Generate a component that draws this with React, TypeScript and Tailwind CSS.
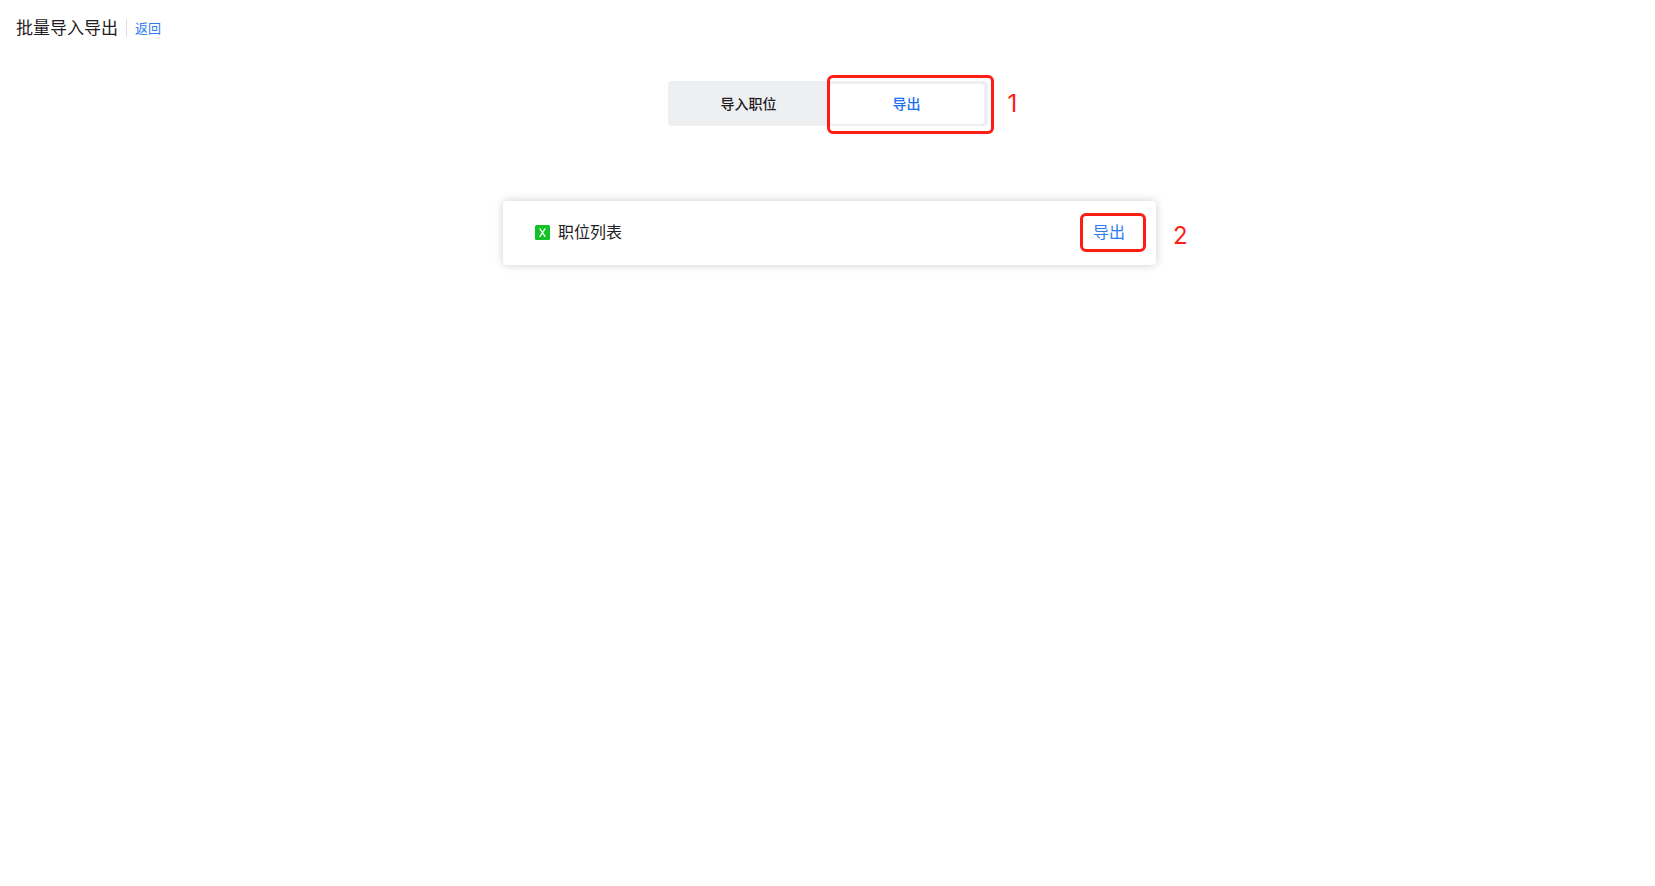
import React from 'react';
import clsx from 'clsx';

interface Tab {
  key: string;
  label: string;
}

interface MarkerProps {
  step: number;
  boxClass: string;
  labelClass: string;
}

const tabs: Tab[] = [
  { key: 'import', label: '导入职位' },
  { key: 'export', label: '导出' },
];

// Red frame with its step number, laid over the control it points at
const Marker: React.FC<MarkerProps> = ({ step, boxClass, labelClass }) => (
  <>
    <span
      className={clsx(
        'pointer-events-none absolute rounded-md border-3 border-[#fd1d14]',
        boxClass
      )}
    />
    <span
      className={clsx(
        "pointer-events-none absolute font-['Inter',sans-serif] text-2xl leading-6 font-normal text-[#fd1d14]",
        labelClass
      )}
    >
      {step}
    </span>
  </>
);

const SheetIcon: React.FC = () => (
  <svg className="h-[15px] w-[15px]" viewBox="0 0 15 15" aria-hidden="true">
    <rect width="15" height="15" rx="1.5" fill="#13c326" />
    <path
      d="M4.7 3.3 10.3 11.8M10.3 3.3 4.7 11.8"
      stroke="#fff"
      strokeWidth="1.3"
      fill="none"
    />
  </svg>
);

const App: React.FC = () => {
  const [active, setActive] = React.useState('export');

  return (
    <div className="min-h-screen bg-white font-['Noto_Sans_CJK_SC',sans-serif] text-[#1f2024]">
      <header className="flex items-center px-4 pt-[15px]">
        <h1 className="pb-0.5 text-[17px] leading-6">批量导入导出</h1>
        <span className="ml-2 h-[18px] w-px bg-[#dcdee3]" />
        <a href="#" className="ml-2 text-[13px] leading-6 text-[#2b7bf3]">
          返回
        </a>
      </header>

      <main className="flex flex-col items-center px-4 pt-10">
        <div className="relative flex h-[45px] w-80 gap-1 rounded-sm bg-[#eeeff1] px-1 pt-[3px] pb-0.5">
          {tabs.map((tab) => (
            <button
              key={tab.key}
              type="button"
              onClick={() => setActive(tab.key)}
              className={clsx(
                'flex-1 rounded-sm pb-0.5 text-sm font-medium',
                active === tab.key && 'bg-white text-[#1b6ff2]'
              )}
            >
              {tab.label}
            </button>
          ))}
          <Marker
            step={1}
            boxClass="-top-1.5 -right-1.5 h-[59px] w-[167px]"
            labelClass="top-[11px] left-full ml-5"
          />
        </div>

        <section className="relative mt-[75px] ml-1 flex h-16 w-full max-w-[653px] items-center rounded-sm bg-white pr-[31px] pb-0.5 pl-8 shadow-[0_0_10px_rgba(0,0,0,0.2)]">
          <SheetIcon />
          <span className="ml-2 pb-0.5 text-base">职位列表</span>
          <button
            type="button"
            className="ml-auto pb-0.5 text-base text-[#2b7bf3]"
          >
            导出
          </button>
          <Marker
            step={2}
            boxClass="top-3 right-2.5 h-[39px] w-[66px]"
            labelClass="top-[23px] left-full ml-[17px]"
          />
        </section>
      </main>
    </div>
  );
};

export default App;
